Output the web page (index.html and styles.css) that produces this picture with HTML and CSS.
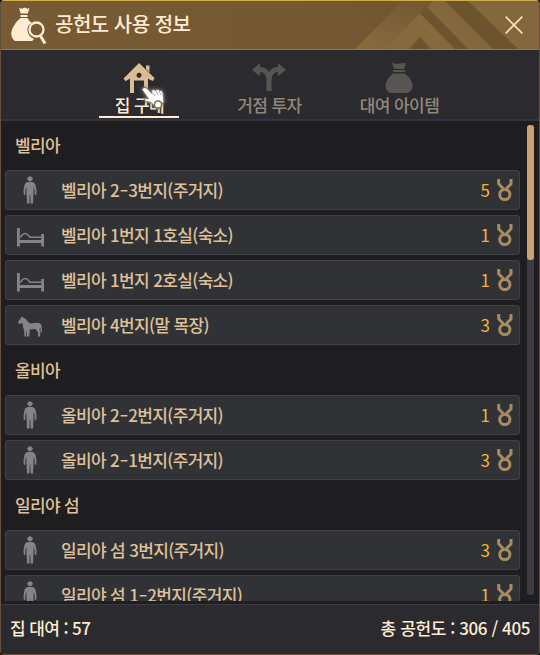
FILE: index.html
```
<!DOCTYPE html>
<html lang="ko">
	<head>
		<meta charset="utf-8" />
		<title>공헌도 사용 정보</title>
		<link rel="stylesheet" href="styles.css">
	</head>
	<body>
		<svg class="defs" width="0" height="0">
			<symbol id="person" viewBox="0 0 14 28"><path d="M4.700 1.800Q5.200.2 7 .2t2.300 1.600l.6.6v1.200l-.8.2Q8.700 5.400 7 5.500 5.300 5.400 4.900 3.800l-.8-.2V2.400z"/><path d="M4.500 6h5q2.500.3 3 3l1 5.500-.2 4-1 .8-.7-1.200.1-3.500-1.100-4-.1 7-.5 9.800H7.600L7.300 18.500h-.6l-.3 8.900H4l-.5-9.800-.1-7-1.100 4 .1 3.500-.7 1.200-1-.8-.2-4L1.500 9q.5-2.700 3-3z"/></symbol>
			<symbol id="bed" viewBox="0 0 27 19"><path d="M0 0h2.800v12h21.400V6H27v12.500h-2.800V15H2.800v3.500H0z"/><path d="M3 9.500 5.200 7Q8.500 4 11 7L13 9.300H24" fill="none" stroke="currentColor" stroke-width="1.500"/></symbol>
			<symbol id="horse" viewBox="0 0 25 21"><path d="M0 6 2.200 3 4 .3l1 1.200q3.500 1 5 4.500l2.500 1.600 6.500-.9q3.200-.2 4.300 2.300 1.200 3 .5 7.800l-1.300-.8-.2-4.800-.8 2.500.8 2-.2 4.800h-2.200l.2-4-2.600-3.500-5.800.5-.3 7H9l-.3-6.200-.6 2.200.2 4H6.400l-.2-6Q4.500 10.500 4.700 7L2 7.800.6 7.600z"/></symbol>
			<symbol id="medal" viewBox="0 0 16 23"><g fill="none" stroke="currentColor" stroke-width="3"><path d="M1.700 0v5l4.800 4.800M14 0v5L9.200 9.800"/><circle cx="7.800" cy="15.500" r="5.100"/></g></symbol>
		</svg>
		<div id="container">
			<div id="top">
				<svg class="deco" width="215" height="48" viewBox="0 0 215 48">
					<defs>
						<linearGradient id="gold" x1="0" y1="1" x2=".7" y2="0"><stop offset="0" stop-color="#8a6c3d"/><stop offset="1" stop-color="#755935"/></linearGradient>
					</defs>
					<path fill="#6f5430" opacity=".5" d="M26 0h53L51 27z"/>
					<path fill="url(#gold)" d="M31 48 79 0h31L62 48z"/>
					<path fill="#866a3e" d="M62 48 96 12l35 36z"/>
					<path fill="#6d5431" d="M96 12l7-6 41 42h-13zM85 48l11-12 11 12zM121 0h23l50 48h-25z"/>
					<path fill="#84673d" d="M103 6l7-6h11l48 48h-25zM144 0h71v48h-21z"/>
				</svg>
				<svg class="logo" width="36" height="38" viewBox="0 0 36 38"><path fill="#ffecd2" d="M8 1l3 .8L13.500.5l3 1.300 2-.8-1.700 5.500h-7zM9.500 8h7v2h-7zM9.500 11h7q1 3 4.600 5-5.500 2-4.500 8 1 6 6.500 8l-2 2H4Q-1.500 30 1 22.500 3.500 16 9.500 11z"/><g fill="none" stroke="#ffecd2"><circle cx="25.500" cy="22.500" r="7" stroke-width="2.300"/><path stroke-width="3" d="M29.500 29l4.500 7.500"/></g></svg>
				<h1>공헌도 사용 정보</h1>
				<svg class="close" width="18" height="18" viewBox="0 0 18 18"><path fill="none" stroke="#ffdfae" stroke-width="1.700" d="M.7.700l16.600 16.600M17.300.700.7 17.300"/></svg>
			</div>
			<div id="tabs">
				<div class="tab on">
					<svg width="32" height="30" viewBox="0 0 32 30"><path fill="#dabd94" fill-rule="evenodd" d="M16 0l15.500 15-1.500 3-3.500-1.500-1.500-1V30h-4V17.500H11V30H7V15.500l-4.500 2.700L.5 15.500zM16 9.700a2.500 2.500 0 1 0 .1 0zM23 2.500h3.500v7L23 6z"/></svg>
					<span>집 구매</span>
					<svg class="hand" width="28" height="30" viewBox="0 0 28 30"><path fill="#fff" stroke="#777269" stroke-width="1" d="M2 2q2-1.500 4 .5l5 5-.5-3q2-2 4 0l1-.8q2-.7 3 1l1.500-.2q2 .5 2 3l.5 5 .5 3-5 5-5-1-3-3-5-1q-2.500-1.500-1-3l3.500.3L2 5Q.5 3.500 2 2z"/><path stroke="#aaa" d="M12 7l2 3m1-5l2 4m1-4l2 4"/><circle cx="17" cy="18.500" r="3.600" fill="#fff" stroke="#776e5c" stroke-width="1.500"/></svg>
				</div>
				<div class="tab">
					<svg width="34" height="30" viewBox="0 0 34 30"><path fill="#575451" d="M0 7l8-7v4q6 0 9 5 3-5 9-5V0l8 7-8 6V9q-6 0-6.500 8v11h-5V17Q14 9 8 9v4z"/></svg>
					<span>거점 투자</span>
				</div>
				<div class="tab">
					<svg width="28" height="30" viewBox="0 0 28 30"><path fill="#575451" d="M7 0l5 1 4-.8 5-.2-2 6H9zM8 7h12v2H8zM8 10.500h12q7.500 6 7.500 13Q27 28 23 30H5Q1 28 .5 23.500.5 16.500 8 10.500z"/></svg>
					<span>대여 아이템</span>
				</div>
			</div>
			<div id="content">
				<div class="list">
					<h2>벨리아</h2>
					<div class="row"><i><svg class="person"><use href="#person"/></svg></i><span>벨리아 2<em>-</em>3번지(주거지)</span><b>5</b><svg class="medal"><use href="#medal"/></svg></div>
					<div class="row"><i><svg class="bed"><use href="#bed"/></svg></i><span>벨리아 1번지 1호실(숙소)</span><b>1</b><svg class="medal"><use href="#medal"/></svg></div>
					<div class="row"><i><svg class="bed"><use href="#bed"/></svg></i><span>벨리아 1번지 2호실(숙소)</span><b>1</b><svg class="medal"><use href="#medal"/></svg></div>
					<div class="row"><i><svg class="horse"><use href="#horse"/></svg></i><span>벨리아 4번지(말 목장)</span><b>3</b><svg class="medal"><use href="#medal"/></svg></div>
					<h2>올비아</h2>
					<div class="row"><i><svg class="person"><use href="#person"/></svg></i><span>올비아 2<em>-</em>2번지(주거지)</span><b>1</b><svg class="medal"><use href="#medal"/></svg></div>
					<div class="row"><i><svg class="person"><use href="#person"/></svg></i><span>올비아 2<em>-</em>1번지(주거지)</span><b>3</b><svg class="medal"><use href="#medal"/></svg></div>
					<h2>일리야 섬</h2>
					<div class="row"><i><svg class="person"><use href="#person"/></svg></i><span>일리야 섬 3번지(주거지)</span><b>3</b><svg class="medal"><use href="#medal"/></svg></div>
					<div class="row"><i><svg class="person"><use href="#person"/></svg></i><span>일리야 섬 1<em>-</em>2번지(주거지)</span><b>1</b><svg class="medal"><use href="#medal"/></svg></div>
				</div>
				<div class="scroll"><div class="thumb"></div></div>
			</div>
			<div id="bottom">
				<span>집 대여 : 57</span>
				<span class="total">총 공헌도 : 306 / 405</span>
			</div>
		</div>
	</body>
</html>
```
FILE: styles.css
```
*{margin:0;padding:0;box-sizing:border-box;}
body{background:#000;font-family:"Noto Sans CJK KR",sans-serif;font-size:17px;overflow:hidden;}
svg{display:block;flex:none;}
h1,h2,b{font-weight:500;}
.defs{position:absolute;}
#container{width:540px;height:655px;display:flex;flex-direction:column;border:1px solid #65503f;
	 border-top-color:#cfad4a;border-radius:4px;background:#1e1e20;overflow:hidden;}
#top{position:relative;height:49px;flex:none;display:flex;align-items:center;padding:0 16px 0 10px;
	 background:linear-gradient(90deg,#785b34,#735733);border-bottom:1px solid #97794b;}
.deco{position:absolute;right:0;top:0;}
.logo{margin-top:1px;}
#top h1{position:relative;margin-left:8px;flex:1;color:#ffecd2;font-size:20px;
	 letter-spacing:-.5px;line-height:46px;margin-top:-2px;}
.close{position:relative;}
#tabs{height:71px;flex:none;display:flex;justify-content:center;gap:50px;background:#2b2a2f;
	 border-bottom:2px solid #34353d;color:#92877b;padding-right:2px;}
.tab{position:relative;width:80px;height:68px;display:flex;flex-direction:column;align-items:center;
	 padding-top:13px;white-space:nowrap;}
.tab span{line-height:24px;margin-left:1px;letter-spacing:-.6px;font-weight:500;}
.on{color:#ffecd2;border-bottom:2px solid #ffecd2;}
.hand{position:absolute;left:42px;top:36px;filter:drop-shadow(0 0 2px #8e8060);}
#content{height:480px;flex:none;display:flex;overflow:hidden;}
.list{width:515px;margin:4px 7px 0 4px;flex:none;display:flex;flex-direction:column;gap:5px;
	 color:#dec199;letter-spacing:-.65px;}
h2{height:40px;flex:none;padding-left:10px;font-size:17px;line-height:39px;}
.row{height:40px;flex:none;display:flex;align-items:center;padding-right:6px;
	 background:#313236;border:1px solid #414248;border-radius:3px;}
.row i{width:55px;flex:none;color:#858585;}
.row i svg{margin:0 auto;fill:currentColor;}
.row .person{width:14px;height:28px;margin-left:17px;}
.row .bed{width:27px;height:19px;margin:5px 0 0 11px;}
.row .horse{width:25px;height:21px;margin:3px 0 0 12px;}
.row span{flex:1;line-height:38px;font-weight:500;}
.row em{display:inline-block;font-style:normal;letter-spacing:0;margin:0 1px 0 2px;transform:scaleX(1.5);}
.row b{color:#f2b43b;font-weight:400;letter-spacing:0;margin:-2px 7px 0 0;}
.medal{width:16px;height:23px;color:#a98b62;}
.scroll{width:7px;height:470px;margin-top:4px;background:#3d3c41;border-radius:3px;}
.thumb{height:135px;background:#cba373;border-radius:3px;}
#bottom{flex:1;display:flex;justify-content:space-between;padding:0 9px;margin-top:3px;
	 background:#2b2a2f;border-top:1px solid #3b3b42;color:#ffecd2;font-weight:500;
	 line-height:46px;letter-spacing:-.6px;}
.total{letter-spacing:-.4px;}
```
